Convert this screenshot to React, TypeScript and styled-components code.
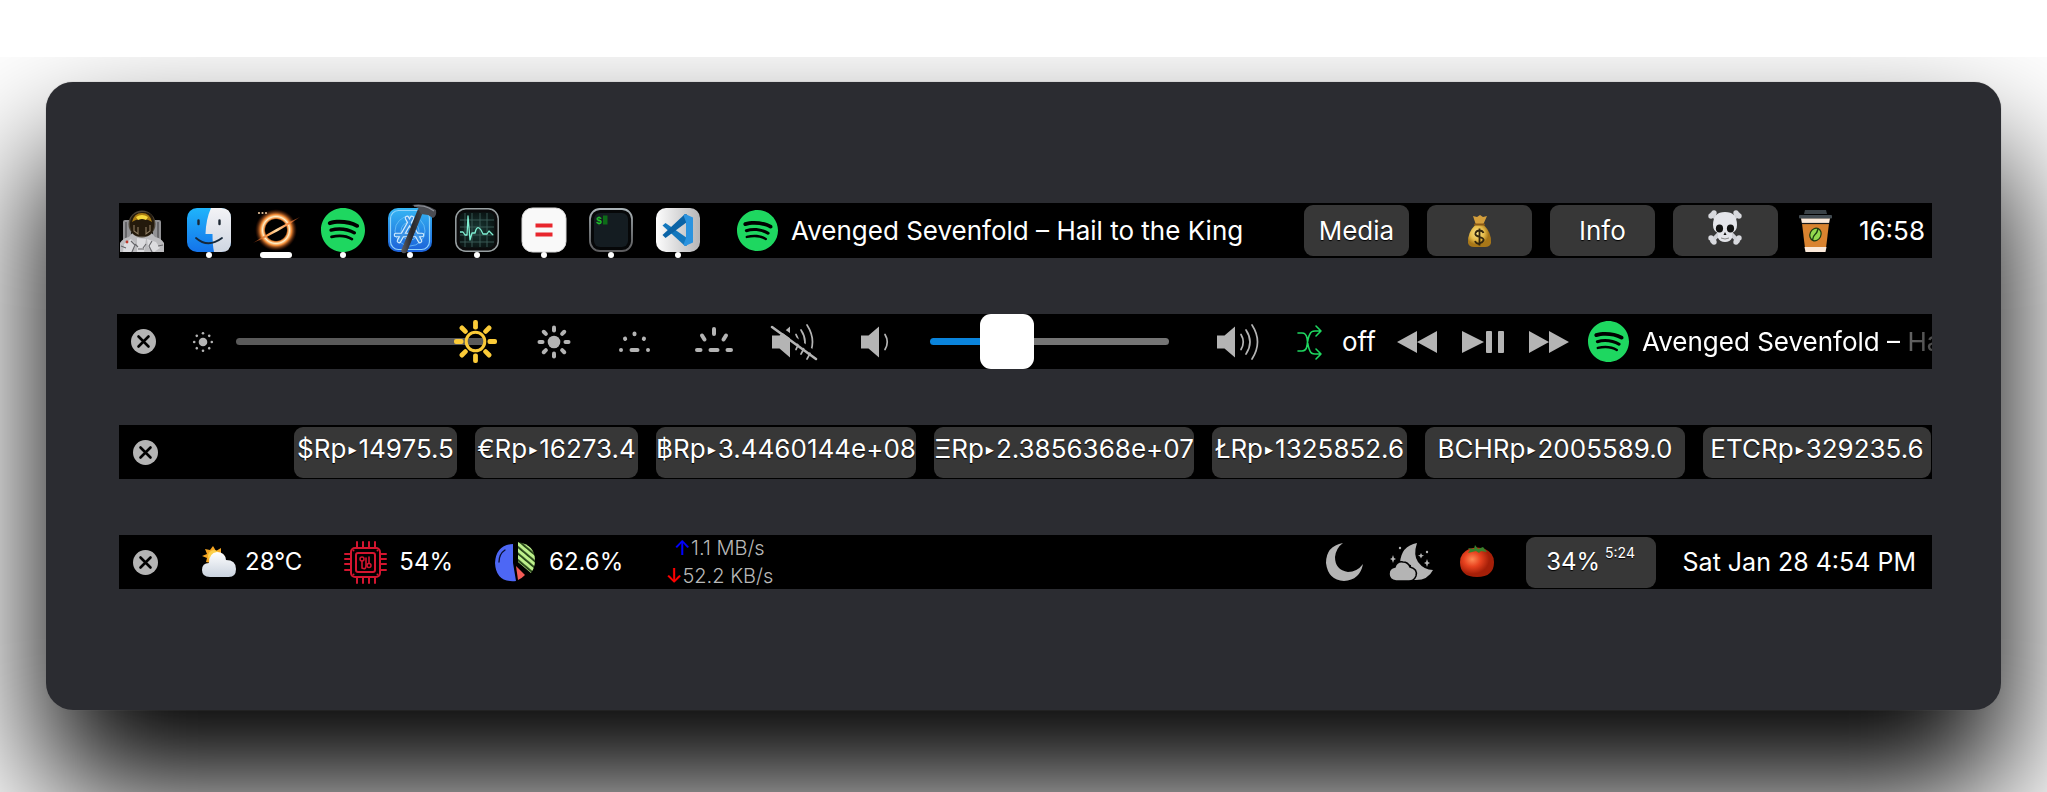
import React from "react";
import styled, { createGlobalStyle, css } from "styled-components";
import { SiSpotify } from "react-icons/si";

const GlobalStyle = createGlobalStyle`
  *, *::before, *::after { box-sizing: border-box; }
  body {
    margin: 0;
    background: #fff;
    color: #fff;
    font-family: Inter, Roboto, "DejaVu Sans", sans-serif;
    font-size: 26px;
    line-height: 32px;
  }
  button { font: inherit; color: inherit; border: 0; padding: 0; margin: 0; background: none; cursor: pointer; }
  svg { display: block; flex: none; overflow: visible; }
`;

/* ---------- layout ---------- */

const Stage = styled.main`
  margin-top: 57px;
  padding: 25px 46px 82px;
  overflow: hidden;
`;

const Card = styled.section`
  display: flex;
  flex-direction: column;
  gap: 56px;
  padding: 121px 69px 121px 73px;
  border-radius: 27px;
  background: #2b2c31;
  box-shadow: 0 0 1px #777, 0 78px 132px 5px #000;
`;

const Bar = styled.div<{ $tall?: boolean; $wide?: boolean; $end?: number }>`
  display: flex;
  align-items: center;
  height: ${(p) => (p.$tall ? 55 : 54)}px;
  margin-left: ${(p) => (p.$wide ? -2 : 0)}px;
  padding-right: ${(p) => p.$end ?? 0}px;
  background: #000;
  white-space: nowrap;
  overflow: hidden;
`;

const Push = styled.div<{ $gap?: number }>`
  display: flex;
  align-items: center;
  gap: ${(p) => p.$gap ?? 0}px;
  margin-left: auto;
`;

/* ---------- dock ---------- */

const Dock = styled.nav`
  display: flex;
  gap: 23px;
  height: 100%;
  padding-left: 1px;
`;

const DockButton = styled.button<{ $mark: "none" | "dot" | "line" }>`
  display: flex;
  flex-direction: column;
  align-items: center;
  width: 44px;
  height: 55px;
  padding-top: 5px;
  &::after {
    content: "";
    height: 6px;
    border-radius: 3px;
    background: #fff;
    width: ${(p) => (p.$mark === "line" ? 32 : p.$mark === "dot" ? 6 : 0)}px;
  }
`;

/* ---------- controls ---------- */

const IconButton = styled.button<{ $w: number }>`
  display: flex;
  align-items: center;
  justify-content: center;
  flex: none;
  width: ${(p) => p.$w}px;
  height: 100%;
`;

const Pill = styled.button<{ $w: number; $raised?: boolean }>`
  display: flex;
  align-items: center;
  justify-content: center;
  flex: none;
  width: ${(p) => p.$w}px;
  height: 51px;
  padding-bottom: ${(p) => (p.$raised ? 7 : 0)}px;
  border-radius: 9px;
  background: #373737;
  text-shadow: 0 1px 1px #000;
  overflow: hidden;
`;

const PairMark = styled.span`
  padding: 0 2px;
  font-size: 16px;
`;

const NowPlaying = styled.button<{ $before: number; $fade?: boolean }>`
  display: flex;
  align-items: center;
  gap: 13px;
  min-width: 0;
  margin-left: ${(p) => p.$before}px;
  overflow: hidden;
  ${(p) =>
    p.$fade &&
    css`
      flex: 1;
      mask-image: linear-gradient(to right, #000 calc(100% - 28px), rgba(0, 0, 0, 0.4) calc(100% - 26px), rgba(0, 0, 0, 0.3) 100%);
    `}
`;

const Shuffle = styled.button`
  display: flex;
  align-items: center;
  gap: 20px;
  width: 106px;
  padding-left: 19px;
  flex: none;
`;

const Brightness = styled.label`
  position: relative;
  display: flex;
  align-items: center;
  flex: none;
  width: 261px;
  height: 100%;
  margin-right: 17px;
  svg { position: absolute; right: 0; pointer-events: none; }
`;

const rangeBase = css`
  appearance: none;
  display: block;
  margin: 0;
  height: 55px;
  background: none;
  flex: none;
`;

const BrightnessRange = styled.input`
  ${rangeBase}
  width: 250px;
  &::-webkit-slider-runnable-track { height: 7px; border-radius: 4px; background: #5a5a5a; }
  &::-webkit-slider-thumb { appearance: none; width: 43px; height: 7px; opacity: 0; }
`;

const VolumeRange = styled.input`
  ${rangeBase}
  width: 239px;
  margin: 0 29px 0 16px;
  &::-webkit-slider-runnable-track {
    height: 7px;
    border-radius: 4px;
    background: linear-gradient(to right, #0a84dc 30%, #757575 30%);
  }
  &::-webkit-slider-thumb {
    appearance: none;
    width: 54px;
    height: 55px;
    margin-top: -24px;
    border-radius: 11px;
    background: #fff;
  }
`;

/* ---------- status ---------- */

const Stats = styled.div`
  display: flex;
  align-items: center;
  gap: 42px;
  margin-left: 30px;
  font-size: 24px;
`;

const Stat = styled.span<{ $gap: number }>`
  display: flex;
  align-items: center;
  gap: ${(p) => p.$gap}px;
`;

const Network = styled.span`
  display: flex;
  flex-direction: column;
  align-items: center;
  font-size: 20px;
  line-height: 28px;
  font-weight: 300;
  color: #b8b8b8;
`;

const Rate = styled.span`
  display: flex;
  align-items: center;
`;

const Arrow = styled.span<{ $c: string }>`
  color: ${(p) => p.$c};
  font-weight: 500;
`;

const Battery = styled(Pill)`
  margin-left: 16px;
  font-size: 24px;
`;

const Remaining = styled.sup`
  align-self: flex-start;
  margin: 8px 0 0 5px;
  font-size: 14px;
  line-height: 16px;
`;

const Clock = styled.time`
  margin-left: 27px;
  font-size: 25px;
`;

const Awake = styled.div`
  display: flex;
  align-items: center;
  gap: 27px;
  margin-left: 3px;
`;

/* ---------- app icons ---------- */

const Astronaut = () => (
  <svg width="44" height="44" viewBox="0 0 44 44" aria-hidden="true">
    <rect x="3" y="12" width="8" height="22" rx="2" fill="#929295" />
    <rect x="33" y="12" width="8" height="22" rx="2" fill="#929295" />
    <path d="M6 14v16M38 14v16" stroke="#58585b" strokeWidth="1.500" />
    <path d="M0 44V35q3-5 9-6l4-5h18l4 5q6 1 9 6v9z" fill="#bcbcbf" />
    <path d="M4 36l7-5 5 5-5 8H3zM27 31l9 3 4 6-6 4-6-5zM17 30l9 1-2 13h-7z" fill="#dcdcdf" />
    <path d="M11 33l4 4-3 7M32 33l-3 5 3 6M1 38l5 2M38 38l5-1M15 36l3 3M26 36l-3 4M18 41h6" stroke="#66666a" strokeWidth="1.100" fill="none" />
    <circle cx="22" cy="16" r="13.500" fill="#4d4538" />
    <path d="M10 18Q9 5 22 4t12 14q-1 9-7 10H17q-6-1-7-10z" fill="#241a0c" />
    <path d="M12 14Q14 5 22 5t10 9q-4-3-10-3t-10 3z" fill="#a97c12" />
    <path d="M16 9q6-4 12 0l-2 3q-4-2-8 0z" fill="#f7d93c" />
    <path d="M14 17v6l4 3v-7M30 17v6l-4 3v-7" stroke="#8d7c62" strokeWidth="1.100" fill="none" />
    <circle cx="7" cy="34" r="1.400" fill="#c0392b" />
  </svg>
);

const Finder = () => (
  <svg width="44" height="44" viewBox="0 0 44 44" aria-hidden="true">
    <defs>
      <linearGradient id="fi-l" x2="0" y2="1"><stop stopColor="#1fb4fb" /><stop offset="1" stopColor="#1473ea" /></linearGradient>
      <linearGradient id="fi-r" x2="0" y2="1"><stop stopColor="#f3f3f6" /><stop offset="1" stopColor="#cfd6e2" /></linearGradient>
    </defs>
    <rect width="44" height="44" rx="10" fill="url(#fi-l)" />
    <path d="M24 0h10q10 0 10 10v24q0 10-10 10h-7q-1.500-7-1.500-18H18.500Q19 11 24 0z" fill="url(#fi-r)" />
    <path d="M11.500 12.500v3.500M32.500 12.500v3.500" stroke="#1c2733" strokeWidth="2.400" strokeLinecap="round" />
    <path d="M9 30q12 10.500 26 0" stroke="#16283a" strokeWidth="1.800" strokeLinecap="round" fill="none" />
  </svg>
);

const BlackHole = () => (
  <svg width="44" height="44" viewBox="0 0 44 44" aria-hidden="true">
    <defs>
      <radialGradient id="bh">
        <stop offset=".5" stopColor="#000" /><stop offset=".56" stopColor="#f08a3a" /><stop offset=".64" stopColor="#fff0c8" />
        <stop offset=".74" stopColor="#f28a35" /><stop offset="1" stopColor="#5a1a04" stopOpacity="0" />
      </radialGradient>
      <linearGradient id="bh-s"><stop stopColor="#8c2f0a" stopOpacity=".6" /><stop offset=".3" stopColor="#ff9a4a" /><stop offset=".5" stopColor="#ffd9a0" /><stop offset=".75" stopColor="#ff8f45" /><stop offset="1" stopColor="#b4481a" stopOpacity=".5" /></linearGradient>
    </defs>
    <circle cx="22" cy="22" r="21" fill="url(#bh)" />
    <path d="M-1 35Q20 21 46 9Q24 25-1 35z" fill="url(#bh-s)" />
    <g fill="#e8c39a"><circle cx="5" cy="5" r="1.100" /><circle cx="8.500" cy="5" r="1.100" /><circle cx="12" cy="5" r="1.100" /></g>
  </svg>
);

const Xcode = () => (
  <svg width="44" height="44" viewBox="0 0 44 44" aria-hidden="true">
    <defs>
      <linearGradient id="xc" x2="0" y2="1"><stop stopColor="#35b6f4" /><stop offset="1" stopColor="#1b60d8" /></linearGradient>
      <linearGradient id="xc-h"><stop stopColor="#5e6066" /><stop offset=".5" stopColor="#26272b" /><stop offset="1" stopColor="#44464b" /></linearGradient>
    </defs>
    <rect width="44" height="44" rx="10" fill="url(#xc)" />
    <rect x="2.500" y="2.500" width="39" height="39" rx="8" fill="none" stroke="#8fd3fb" strokeWidth="1.200" />
    <circle cx="22" cy="23" r="15" fill="none" stroke="#6fc2f7" strokeWidth=".8" />
    <circle cx="22" cy="23" r="9" fill="none" stroke="#6fc2f7" strokeWidth=".8" />
    <g fill="none" strokeLinecap="round">
      <g stroke="#d4ecfd" strokeWidth="4.600"><path d="M24 10L11 33M19 10l13 23M8 27h26" /></g>
      <g stroke="#3b93e6" strokeWidth="2.400"><path d="M24 10L11 33M19 10l13 23M8 27h26" /></g>
    </g>
    <path d="M30 1l5 3-16 40q-4 3-6-1z" fill="url(#xc-h)" />
    <path d="M24-3q10-2 18 2l6 3q1 6-3 8l-5-3-7-1-3-6q-4-2-6-3z" fill="#4a4c52" />
    <path d="M26-2q9-1 15 2l5 3" stroke="#92959d" strokeWidth="1.200" fill="none" />
  </svg>
);

const Activity = () => (
  <svg width="44" height="44" viewBox="0 0 44 44" aria-hidden="true">
    <defs><radialGradient id="am"><stop stopColor="#1b3a36" /><stop offset="1" stopColor="#0b1716" /></radialGradient></defs>
    <rect x=".8" y=".8" width="42.400" height="42.400" rx="10" fill="#0b0b0c" stroke="#98a0a2" strokeWidth="1.500" />
    <rect x="4.500" y="4.500" width="35" height="35" rx="6" fill="url(#am)" />
    <path d="M10 5v34M17 5v34M25 5v34M32 5v34M5 12h34M5 19h34M5 27h34M5 34h34" stroke="#3d5f5a" strokeWidth=".9" />
    <path d="M5 24h3l2 3h2l1-19 2 24 2-7h3q2-9 6-3l2 4h4l2-3 4 4" fill="none" stroke="#7ff0d3" strokeWidth="1.300" strokeLinejoin="round" />
  </svg>
);

const Equals = () => (
  <svg width="44" height="44" viewBox="0 0 44 44" aria-hidden="true">
    <rect width="44" height="44" rx="10.500" fill="#f9f9f9" stroke="#d9d9d9" />
    <path d="M13.500 15.500h17v4h-17zM13.500 24.500h17v4h-17z" fill="#e8262d" />
  </svg>
);

const Terminal = () => (
  <svg width="44" height="44" viewBox="0 0 44 44" aria-hidden="true">
    <defs><linearGradient id="tm" x2="0" y2="1"><stop stopColor="#a9b2b6" /><stop offset="1" stopColor="#5c5c5e" /></linearGradient></defs>
    <rect x="1" y="1" width="42" height="42" rx="10" fill="#060708" stroke="url(#tm)" strokeWidth="1.800" />
    <rect x="5" y="5" width="34" height="34" rx="6" fill="#141c21" />
    <text x="7" y="16" fill="#1fc42a" fontSize="10" fontWeight="700" fontFamily="Liberation Mono, monospace">$</text>
    <path d="M14 7.500h4.500v9H14z" fill="#0d6b18" />
  </svg>
);

const VSCode = () => (
  <svg width="44" height="44" viewBox="0 0 44 44" aria-hidden="true">
    <defs><linearGradient id="vs"><stop stopColor="#fdfdfd" /><stop offset="1" stopColor="#b5b5b7" /></linearGradient></defs>
    <rect width="44" height="44" rx="10" fill="url(#vs)" />
    <path d="M6.500 17.500l3-2.500L31 30v7.500L29 38z" fill="#1377bd" />
    <path d="M6.500 27l3 3L31 14V6.500L29 6z" fill="#0a63a6" />
    <path d="M29 6l8 3.500v25L29 38l-1.500-1.500L30 30V14l-2.500-6.500z" fill="#2b93df" />
  </svg>
);

const SpotifyMark = ({ size }: { size: number }) => <SiSpotify size={size} color="#1ed760" aria-hidden="true" />;

/* ---------- pictograms ---------- */

const MoneyBag = () => (
  <svg width="25" height="34" viewBox="0 0 25 34" aria-hidden="true">
    <defs><radialGradient id="mb" cx=".4" cy=".4"><stop stopColor="#fbe48b" /><stop offset=".6" stopColor="#e5bb4a" /><stop offset="1" stopColor="#a87718" /></radialGradient></defs>
    <path d="M6 2l4 1 3-2 3 2 4-1-4 9H9z" fill="#d49f3c" />
    <path d="M9 10h7q9 9 8 19-1 4-6 4H7q-5 0-6-4Q0 19 9 10z" fill="url(#mb)" />
    <path d="M8 10.500h9" stroke="#8a5a17" strokeWidth="2" strokeLinecap="round" />
    <path d="M16.500 19q-1-2.500-4-2.500t-4 2.500 4 4 4 3.500-4 3-4.500-2.500M12.500 14.500v17" stroke="#33270f" strokeWidth="1.800" fill="none" />
  </svg>
);

const Skull = () => (
  <svg width="34" height="35" viewBox="0 0 34 35" aria-hidden="true">
    <g stroke="#cfd0d6" strokeWidth="4" strokeLinecap="round"><path d="M4 4l26 27M30 4L4 31" /></g>
    <g fill="#d8d9de">
      <circle cx="6" cy="3" r="2.700" /><circle cx="3" cy="6" r="2.700" /><circle cx="28" cy="3" r="2.700" /><circle cx="31" cy="6" r="2.700" />
      <circle cx="3" cy="28" r="2.700" /><circle cx="6" cy="32" r="2.700" /><circle cx="31" cy="28" r="2.700" /><circle cx="28" cy="32" r="2.700" />
    </g>
    <path d="M17 2q12 0 12 13 0 6-5 8v5q-2 4-7 4t-7-4v-5q-5-2-5-8Q5 2 17 2z" fill="#e4e5ea" />
    <ellipse cx="11.500" cy="18.500" rx="3.600" ry="4" fill="#111" /><ellipse cx="22.500" cy="18.500" rx="3.600" ry="4" fill="#111" />
    <path d="M17 22l1.500 3h-3z" fill="#111" />
    <path d="M13 28q4 2 8 0" stroke="#888" fill="none" />
  </svg>
);

const Coffee = () => (
  <svg width="33" height="42" viewBox="0 0 33 42" aria-hidden="true">
    <path d="M6 0h21l1 4H5z" fill="#3a4247" /><rect x="0" y="5" width="33" height="3.500" rx="1" fill="#434c52" />
    <path d="M2 8.500h29l-1 5H3z" fill="#fbe9d9" /><path d="M3 13.500h27L27 38H6z" fill="#d9832f" />
    <path d="M5.500 37h22l-1 5h-20z" fill="#fbe9d9" /><path d="M3 13.500h27" stroke="#1b1b1b" strokeWidth="1.200" />
    <ellipse cx="16.500" cy="24.500" rx="5.500" ry="6.500" transform="rotate(25 16.500 24.500)" fill="#93d94e" stroke="#1d3b12" strokeWidth="1.200" />
    <path d="M19 19q-1 4-3 5.500T13.500 30" stroke="#1d3b12" strokeWidth="1.400" fill="none" />
  </svg>
);

const Close = () => (
  <svg width="25" height="25" viewBox="0 0 25 25" aria-hidden="true">
    <circle cx="12.500" cy="12.500" r="12.500" fill="#b4b4b4" />
    <path d="M7.500 7.500l10 10m0-10l-10 10" stroke="#000" strokeWidth="2.600" strokeLinecap="round" />
  </svg>
);

const angles = [0, 45, 90, 135, 180, 225, 270, 315];

const SunSmall = () => (
  <svg width="20" height="20" viewBox="-10 -10 20 20" fill="#b4b4b4" aria-hidden="true">
    <circle r="4.300" />
    {angles.map((a) => <circle key={a} cy="-8.800" r="1.300" transform={`rotate(${a})`} />)}
  </svg>
);

const Sun = () => (
  <svg width="34" height="34" viewBox="-17 -17 34 34" fill="#b4b4b4" aria-hidden="true">
    <circle r="6.300" />
    {angles.map((a) => <rect key={a} x="-2" y="-16.500" width="4" height="7" rx="2" transform={`rotate(${a})`} />)}
  </svg>
);

const SunThumb = () => (
  <svg width="43" height="43" viewBox="-21.500 -21.500 43 43" aria-hidden="true">
    <circle r="9.300" fill="none" stroke="#fbcb38" strokeWidth="3" />
    {angles.map((a) => <rect key={a} x="-2.400" y="-21.500" width="4.800" height="9.500" rx="2" fill="#fbcb38" transform={`rotate(${a})`} />)}
  </svg>
);

const KeysLow = () => (
  <svg width="31" height="38" viewBox="0 0 31 38" stroke="#b4b4b4" strokeWidth="4" strokeLinecap="round" aria-hidden="true">
    <path d="M2 27h.01M12.500 27h6M29 27h.01M6 15.500l.2.500M15.500 10.500v.8M25 15.500l-.2.500" />
  </svg>
);

const KeysHigh = () => (
  <svg width="38" height="38" viewBox="0 0 38 38" stroke="#b4b4b4" strokeWidth="4" strokeLinecap="round" aria-hidden="true">
    <path d="M2 27h3.500M15.500 27h7M32.500 27h3.500M7 12.500l2.500 4M19 6v5M31 12.500l-2.500 4" />
  </svg>
);

const Horn = () => <path d="M0 11.500h7.500L18 2.500v31L7.500 24.500H0z" fill="#b4b4b4" />;
const wave1 = "M24 10.500q4.500 7.500 0 15";
const wave2 = "M29 6q8 12 0 24";
const wave3 = "M35 1q11 17 0 34";

const Muted = () => (
  <svg width="46" height="36" viewBox="0 0 46 36" fill="none" stroke="#b4b4b4" strokeWidth="1.700" strokeLinecap="round" aria-hidden="true">
    <g transform="translate(1 0)"><g stroke="none"><Horn /></g><path d={wave1} /><path d={wave2} /><path d={wave3} /></g>
    <path d="M4 1l38 27" stroke="#000" strokeWidth="4" strokeLinecap="butt" /><path d="M1 3l44 32" strokeWidth="2.600" />
  </svg>
);

const VolumeLow = () => (
  <svg width="27" height="36" viewBox="0 0 27 36" fill="none" aria-hidden="true">
    <Horn /><path d={wave1} stroke="#b4b4b4" strokeWidth="1.700" strokeLinecap="round" />
  </svg>
);

const VolumeHigh = () => (
  <svg width="42" height="36" viewBox="0 0 42 36" fill="none" stroke="#b4b4b4" strokeWidth="1.700" strokeLinecap="round" aria-hidden="true">
    <g stroke="none"><Horn /></g><path d={wave1} /><path d={wave2} /><path d={wave3} />
  </svg>
);

const ShuffleIcon = () => (
  <svg width="25" height="38" viewBox="0 0 25 38" fill="none" stroke="#1ed760" strokeWidth="1.600" strokeLinecap="round" strokeLinejoin="round" aria-hidden="true">
    <path d="M1 10h4q4 0 5 5 1 9 3 13 1 3 5 3h6M1 28h4q4 0 5-5 1-9 3-12 1-3 5-3h6M19 3l5 5-5 5M19 26l5 5-5 5" />
  </svg>
);

const Rewind = () => (
  <svg width="40" height="22" viewBox="0 0 40 22" fill="#b4b4b4" aria-hidden="true"><path d="M0 11L20 0v22zM20 11L40 0v22z" /></svg>
);
const Forward = () => (
  <svg width="40" height="22" viewBox="0 0 40 22" fill="#b4b4b4" aria-hidden="true"><path d="M0 0l20 11L0 22zM20 0l20 11-20 11z" /></svg>
);
const PlayPause = () => (
  <svg width="42" height="22" viewBox="0 0 42 22" fill="#b4b4b4" aria-hidden="true"><path d="M0 0l22 11L0 22z" /><rect x="24" width="6" height="22" rx="1" /><rect x="36" width="6" height="22" rx="1" /></svg>
);

const Weather = () => (
  <svg width="34" height="42" viewBox="0 0 34 42" aria-hidden="true">
    <defs><linearGradient id="wc" x2="0" y2="1"><stop stopColor="#fff" /><stop offset="1" stopColor="#c9d2de" /></linearGradient></defs>
    <path d="M11 5l3 5 5-3v6l4 2-4 4-10 3-5-1 1-4-5-2 5-2-2-5 5 1z" fill="#f5a623" />
    <circle cx="12" cy="15" r="6" fill="#fdd04a" />
    <path d="M8 36q-8 0-8-7t7-7q0-10 8-11 8 0 9 8 10 0 10 9t-9 8z" fill="url(#wc)" />
  </svg>
);

const Cpu = () => (
  <svg width="43" height="43" viewBox="0 0 43 43" fill="none" stroke="#d3152f" strokeWidth="2" strokeLinecap="round" aria-hidden="true">
    <rect x="7" y="7" width="29" height="29" rx="4" /><rect x="12" y="12" width="19" height="19" rx="2" />
    <path d="M13 1v6M19 1v6M25 1v6M31 1v6M13 36v6M19 36v6M25 36v6M31 36v6M1 13h6M1 18h6M1 23h6M1 29h6M36 13h6M36 18h6M36 23h6M36 29h6" />
    <path d="M18 20v7q4 2 4-2v-8M25 16v6" strokeWidth="1.600" /><circle cx="18" cy="18" r="2" strokeWidth="1.500" /><circle cx="25" cy="24.500" r="2" strokeWidth="1.500" />
    <path d="M9.500 9.500h.01M33.500 9.500h.01M9.500 33.500h.01M33.500 33.500h.01" />
  </svg>
);

const Memory = () => (
  <svg width="41" height="40" viewBox="0 0 41 40" aria-hidden="true">
    <defs>
      <pattern id="mp" width="5" height="5" patternUnits="userSpaceOnUse" patternTransform="rotate(40)"><rect width="5" height="5" fill="#1c3a10" /><rect width="5" height="3.200" fill="#bdf08b" /></pattern>
    </defs>
    <path d="M18 2v19l3 18Q1 41 0 21 1 3 18 2z" fill="#4d67f5" />
    <path d="M4 20q0-8 6-12" stroke="#0b1030" strokeWidth="1.300" fill="none" strokeLinecap="round" />
    <path d="M23 0q17 3 17 18 0 8-4 13L23 20z" fill="url(#mp)" />
    <path d="M21 24l9 9q-4 4-7 5z" fill="#f45b56" />
  </svg>
);

const Moon = () => (
  <svg width="37" height="38" viewBox="0 0 37 38" fill="#b4b4b4" aria-hidden="true">
    <path d="M17 0Q0 3 0 20q2 17 18 18 16-1 19-17-6 8-15 8-13-2-13-15 1-9 8-14z" />
  </svg>
);

const MoonCloud = () => (
  <svg width="44" height="38" viewBox="0 0 44 38" fill="#b4b4b4" aria-hidden="true">
    <path d="M28 0q-4 12 1 19 6 8 15 8-5 10-17 10h-5V22L11 20Q12 3 28 0z" />
    <path d="M7 38q-7-1-7-7t6-7q2-6 8-5 5 0 7 5 8 2 6 9-2 5-7 5z" stroke="#000" strokeWidth="1.500" />
    <path d="M4 12l1 3 2 1-2 1-1 3-1-3-2-1 2-1zM32 10l1 2 2 .500-2 1-1 2-1-2-2-1 2-.500zM38 16l1 3 2 1-2 1-1 3-1-3-2-1 2-1z" />
    <circle cx="11" cy="5" r="1.200" /><circle cx="38" cy="9" r="1.200" />
  </svg>
);

const Tomato = () => (
  <svg width="34" height="34" viewBox="0 0 34 34" aria-hidden="true">
    <defs><radialGradient id="to" cx=".36" cy=".4"><stop stopColor="#ff8a55" /><stop offset=".5" stopColor="#e8421f" /><stop offset="1" stopColor="#a51f08" /></radialGradient></defs>
    <path d="M9 4q8-3 16 0 9 4 9 13 0 15-17 15T0 17Q0 8 9 4z" fill="url(#to)" />
    <path d="M8 3l6 1 1-4 3 4 5-2 4 5-6-1-2 2-3-2-8 2 2-3z" fill="#39802c" />
  </svg>
);

/* ---------- content ---------- */

const TRACK = "Avenged Sevenfold – Hail to the King";

const apps: { name: string; mark: "none" | "dot" | "line"; icon: React.ReactNode }[] = [
  { name: "Astronaut", mark: "none", icon: <Astronaut /> },
  { name: "Finder", mark: "dot", icon: <Finder /> },
  { name: "Black hole", mark: "line", icon: <BlackHole /> },
  { name: "Spotify", mark: "dot", icon: <SpotifyMark size={44} /> },
  { name: "Xcode", mark: "dot", icon: <Xcode /> },
  { name: "Activity Monitor", mark: "dot", icon: <Activity /> },
  { name: "Calculator", mark: "dot", icon: <Equals /> },
  { name: "Terminal", mark: "dot", icon: <Terminal /> },
  { name: "Code", mark: "dot", icon: <VSCode /> },
];

const rates = [
  { coin: "$", value: "14975.5", width: 163 },
  { coin: "€", value: "16273.4", width: 163 },
  { coin: "฿", value: "3.4460144e+08", width: 260 },
  { coin: "Ξ", value: "2.3856368e+07", width: 260 },
  { coin: "Ł", value: "1325852.6", width: 195 },
  { coin: "BCH", value: "2005589.0", width: 260 },
  { coin: "ETC", value: "329235.6", width: 228 },
];

const CloseButton = () => (
  <IconButton $w={53} aria-label="Close"><Close /></IconButton>
);

export default function App() {
  return (
    <>
      <GlobalStyle />
      <Stage>
        <Card>
          <Bar $tall $end={7}>
            <Dock aria-label="Dock">
              {apps.map((a) => (
                <DockButton key={a.name} $mark={a.mark} aria-label={a.name}>{a.icon}</DockButton>
              ))}
            </Dock>
            <NowPlaying $before={37}><SpotifyMark size={41} />{TRACK}</NowPlaying>
            <Push $gap={18}>
              <Pill $w={105}>Media</Pill>
              <Pill $w={105} aria-label="Finance"><MoneyBag /></Pill>
              <Pill $w={105}>Info</Pill>
              <Pill $w={105} $raised aria-label="Danger"><Skull /></Pill>
              <Awake>
                <button aria-label="Keep awake"><Coffee /></button>
                <time>16:58</time>
              </Awake>
            </Push>
          </Bar>

          <Bar $tall $wide>
            <CloseButton />
            <IconButton $w={66} aria-label="Dim display"><SunSmall /></IconButton>
            <Brightness>
              <BrightnessRange type="range" defaultValue={100} aria-label="Brightness" />
              <SunThumb />
            </Brightness>
            <IconButton $w={80} aria-label="Brighten display"><Sun /></IconButton>
            <IconButton $w={80} aria-label="Dim keyboard"><KeysLow /></IconButton>
            <IconButton $w={80} aria-label="Brighten keyboard"><KeysHigh /></IconButton>
            <IconButton $w={80} aria-label="Mute"><Muted /></IconButton>
            <IconButton $w={80} aria-label="Volume down"><VolumeLow /></IconButton>
            <VolumeRange type="range" defaultValue={27} aria-label="Volume" />
            <IconButton $w={80} aria-label="Volume up"><VolumeHigh /></IconButton>
            <Shuffle><ShuffleIcon />off</Shuffle>
            <IconButton $w={66} aria-label="Previous"><Rewind /></IconButton>
            <IconButton $w={66} aria-label="Play or pause"><PlayPause /></IconButton>
            <IconButton $w={66} aria-label="Next"><Forward /></IconButton>
            <NowPlaying $before={6} $fade><SpotifyMark size={41} />{TRACK}</NowPlaying>
          </Bar>

          <Bar $end={1}>
            <CloseButton />
            <Push $gap={18}>
              {rates.map((r) => (
                <Pill key={r.coin} $w={r.width} $raised>
                  {r.coin}Rp<PairMark>▸</PairMark>{r.value}
                </Pill>
              ))}
            </Push>
          </Bar>

          <Bar $end={16}>
            <CloseButton />
            <Stats>
              <Stat $gap={9}><Weather />28°C</Stat>
              <Stat $gap={12}><Cpu />54%</Stat>
              <Stat $gap={13}><Memory />62.6%</Stat>
              <Network>
                <Rate><Arrow $c="#0000ff">↑</Arrow>1.1 MB/s</Rate>
                <Rate><Arrow $c="#ff0000">↓</Arrow>52.2 KB/s</Rate>
              </Network>
            </Stats>
            <Push>
              <IconButton $w={66} aria-label="Do not disturb"><Moon /></IconButton>
              <IconButton $w={66} aria-label="Night shift"><MoonCloud /></IconButton>
              <IconButton $w={66} aria-label="Pomodoro"><Tomato /></IconButton>
              <Battery $w={130}>34%<Remaining>5:24</Remaining></Battery>
              <Clock>Sat Jan 28 4:54 PM</Clock>
            </Push>
          </Bar>
        </Card>
      </Stage>
    </>
  );
}
